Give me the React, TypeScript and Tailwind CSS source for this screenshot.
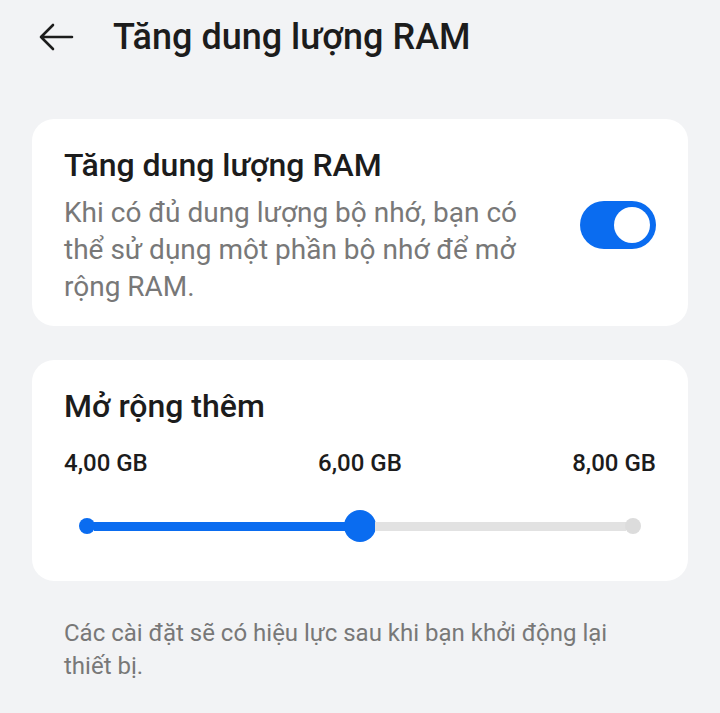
import { useState } from "react";

const font = { fontFamily: "Roboto, 'Noto Sans', sans-serif" };

function Toggle({ on, onChange }: { on: boolean; onChange: () => void }) {
  return (
    <button
      onClick={onChange}
      className={`flex shrink-0 items-center w-[76px] h-[48px] px-[6px] rounded-full transition-colors ${
        on ? "justify-end bg-[#0a6cf0]" : "justify-start bg-[#d6d6d6]"
      }`}
    >
      <span className="w-[36px] h-[36px] rounded-full bg-white" />
    </button>
  );
}

const steps = ["4,00 GB", "6,00 GB", "8,00 GB"];

// Stepped slider: dot, filled track, thumb, empty track, dot
function Slider() {
  return (
    <div className="flex items-center h-[32px] mx-[15px] mt-[31px]">
      <span className="w-[16px] h-[16px] rounded-full bg-[#0a6cf0]" />
      <span className="flex-1 h-[9px] -mx-[1px] bg-[#0a6cf0]" />
      <span className="w-[32px] h-[32px] rounded-full bg-[#0a6cf0]" />
      <span className="flex-1 h-[9px] -mx-[1px] bg-[#e2e2e2]" />
      <span className="w-[16px] h-[16px] rounded-full bg-[#dcdcdc]" />
    </div>
  );
}

export default function App() {
  const [on, setOn] = useState(true);

  return (
    <div className="min-h-[713px] w-[720px] bg-[#f2f3f5] text-[#1c1c1c]" style={font}>
      {/* Header */}
      <div className="flex items-center h-[74px] pl-[38px]">
        <svg width="36" height="28" viewBox="0 0 36 28" fill="none" stroke="#1c1c1c" strokeWidth="2.6" strokeLinecap="round" strokeLinejoin="round">
          <path d="M34 14H3M15 2L3 14l12 12" />
        </svg>
        <h1 className="ml-[39px] text-[36px] leading-none font-medium">Tăng dung lượng RAM</h1>
      </div>

      <div className="px-[32px] pt-[45px] flex flex-col gap-[34px]">
        {/* RAM toggle card */}
        <div className="flex items-center justify-between bg-white rounded-[22px] px-[32px] pt-[26px] pb-[21px]">
          <div>
            <div className="text-[32px] font-medium leading-[40px]">Tăng dung lượng RAM</div>
            <p className="w-[490px] mt-[9px] text-[28px] leading-[37px] text-[#787878]">
              Khi có đủ dung lượng bộ nhớ, bạn có thể sử dụng một phần bộ nhớ để mở rộng RAM.
            </p>
          </div>
          <Toggle on={on} onChange={() => setOn(!on)} />
        </div>

        {/* Extension card */}
        <div className="bg-white rounded-[22px] px-[32px] pt-[26px] pb-[39px]">
          <div className="text-[32px] font-medium leading-[40px]">Mở rộng thêm</div>
          <div className="flex justify-between mt-[21px] text-[24px] font-medium leading-[32px]">
            {steps.map((s) => (
              <span key={s}>{s}</span>
            ))}
          </div>
          <Slider />
        </div>
      </div>

      <p className="px-[64px] pt-[36px] text-[24px] leading-[33px] text-[#787878]">
        Các cài đặt sẽ có hiệu lực sau khi bạn khởi động lại thiết bị.
      </p>
    </div>
  );
}
